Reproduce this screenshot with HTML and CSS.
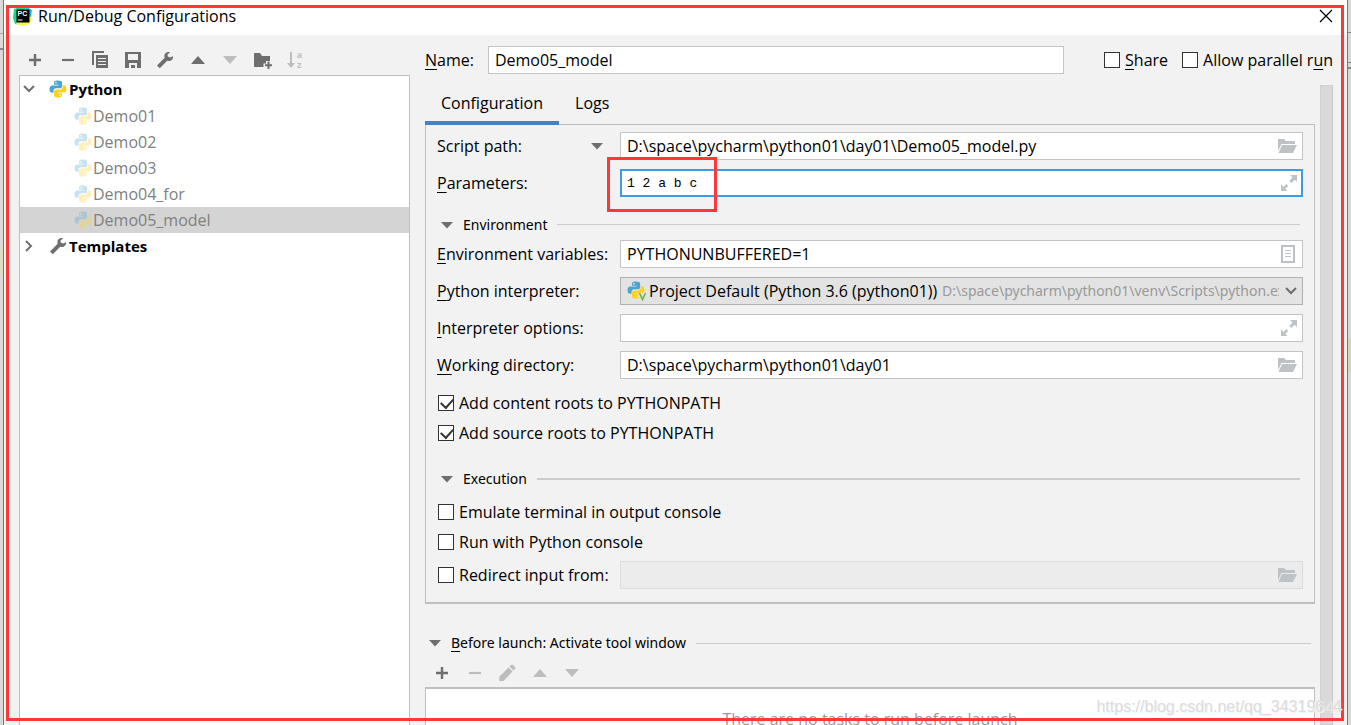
FILE: index.html
```html
<!DOCTYPE html>
<html lang="en">
<head>
<meta charset="utf-8">
<title>Run/Debug Configurations</title>
<link rel="stylesheet" href="styles.css">
</head>
<body>
<svg class="defs" aria-hidden="true">
  <symbol id="python" viewBox="0 0 18 18">
    <path fill="#4fa3d1" d="M8.8.5C5.6.5 5 1.7 5 2.8v2h4.300v.7H3.200C1.500 5.500.500 7 .500 9.200c0 2.300 1 3.600 2.500 3.600h1.500v-1.900c0-1.500 1.200-2.600 2.600-2.600h4c1.200 0 2-.9 2-2.100V2.800C13.100 1.300 11.800.5 8.800.5z"/>
    <path fill="#ffd11f" d="M9.200 17.500c3.200 0 3.800-1.200 3.800-2.300v-2H8.700v-.7h6.100c1.700 0 2.700-1.500 2.700-3.700 0-2.300-1-3.600-2.500-3.600h-1.300v1.700c0 1.500-1.200 2.600-2.600 2.600H7c-1.200 0-2 .9-2 2.100v3.600c0 1.500 1.200 2.300 4.200 2.300z"/>
    <circle cx="7" cy="2.700" r=".8" fill="#fff"/><circle cx="11" cy="15.300" r=".8" fill="#fff"/>
  </symbol>
  <symbol id="wrench" viewBox="0 0 18 18">
    <path fill="currentColor" d="M17 5.200 14 6.600 11.800 5.600 11.500 3.400 14.200 1.200C11.500.2 8.800 1.600 8.400 4.300c-.1.900 0 1.700.3 2.400L1 14.400 3.800 17.200 11.200 9.800c3.300 1.100 6.200-1.400 5.800-4.600z"/>
  </symbol>
  <symbol id="plus" viewBox="0 0 18 18"><path stroke="currentColor" stroke-width="2.400" d="M9 3v12M3 9h12"/></symbol>
  <symbol id="minus" viewBox="0 0 18 18"><path stroke="currentColor" stroke-width="2.200" d="M3 9h12"/></symbol>
  <symbol id="up" viewBox="0 0 18 18"><path fill="currentColor" d="M2 13 9 5l7 8z"/></symbol>
  <symbol id="down" viewBox="0 0 18 18"><path fill="currentColor" d="M2 5h14l-7 8z"/></symbol>
  <symbol id="tri" viewBox="0 0 12 8"><path fill="currentColor" d="M0 1h12L6 7.500z"/></symbol>
  <symbol id="folder" viewBox="0 0 20 16"><path fill="currentColor" d="M1 1h6l2 2h9v3H4.500L1 13zM5 7h15l-4 8H1.500z"/></symbol>
  <symbol id="expand" viewBox="0 0 16 16"><path fill="currentColor" d="M9 0h7v7l-2.300-2.300-3.400 3.300-2-2 3.300-3.500zM0 9v7h6.500l-2.200-2.200 2.900-2.900-1.800-1.800-3 3z"/></symbol>
</svg>
<div class="desktop">
<main class="dialog">
  <header class="titlebar">
    <svg class="logo" viewBox="0 0 20 20">
      <path fill="#21d789" d="M1 3 9 0l5 1-4 18-8-1-2-6z"/><path fill="#fcf84a" d="m13 2 6 9-2 7-7 2-7-2 2-4z"/><path fill="#07c3f2" d="m13 1 6 3-1 7-4-2z"/>
      <path d="M3.500 3.500h13v13h-13z"/>
      <text class="logo-text" x="4.500" y="10">PC</text><path fill="#fff" d="M5 13.500h4.500v1H5z"/>
    </svg>
    <h1 class="title">Run/Debug Configurations</h1>
    <button class="icon-btn close" aria-label="Close"><svg viewBox="0 0 14 14" width="14" height="14"><path stroke="#000" stroke-width="1.200" d="m1 1 12 12M13 1 1 13"/></svg></button>
  </header>
  <div class="body">
    <aside class="side">
      <div class="toolbar">
        <button class="icon-btn" aria-label="Add"><svg class="ic"><use href="#plus"/></svg></button>
        <button class="icon-btn" aria-label="Remove"><svg class="ic"><use href="#minus"/></svg></button>
        <button class="icon-btn" aria-label="Copy"><svg class="ic" viewBox="0 0 18 18"><path fill="currentColor" d="M1 0h12v2H3v12H1zM5 4h12v13H5z"/><path stroke="#f2f2f2" d="M7 7.500h8M7 10.500h8M7 13.500h8"/></svg></button>
        <button class="icon-btn" aria-label="Save"><svg class="ic" viewBox="0 0 18 18"><path fill="currentColor" fill-rule="evenodd" d="M1 1h16v16H1zm3 2v6h10V3zm1 9v5h8v-5z"/><path fill="currentColor" d="M7 14h4v3H7z"/></svg></button>
        <button class="icon-btn" aria-label="Edit templates"><svg class="ic"><use href="#wrench"/></svg></button>
        <button class="icon-btn" aria-label="Move up"><svg class="ic"><use href="#up"/></svg></button>
        <button class="icon-btn off" aria-label="Move down" disabled><svg class="ic"><use href="#down"/></svg></button>
        <button class="icon-btn" aria-label="New folder"><svg class="ic" viewBox="0 0 18 18"><path fill="currentColor" d="M0 2h6l2 3h8v5h-4v2.500H9.500V16H0z"/><path stroke="currentColor" stroke-width="2" d="M14.500 10.500v7.500M11 14.300h7"/></svg></button>
        <button class="icon-btn off" aria-label="Sort"><svg class="ic" viewBox="0 0 18 18"><path fill="currentColor" d="M4 1h2v11h3l-4 5-4-5h3z"/><text class="sort-text" x="11" y="7">a</text><text class="sort-text" x="11" y="17">z</text></svg></button>
      </div>
      <ul class="tree">
        <li class="node root"><svg class="twist" viewBox="0 0 12 12"><path d="m1 3 5 5 5-5"/></svg><svg class="ic"><use href="#python"/></svg>Python</li>
        <li class="node leaf"><svg class="ic dim"><use href="#python"/></svg>Demo01</li>
        <li class="node leaf"><svg class="ic dim"><use href="#python"/></svg>Demo02</li>
        <li class="node leaf"><svg class="ic dim"><use href="#python"/></svg>Demo03</li>
        <li class="node leaf"><svg class="ic dim"><use href="#python"/></svg>Demo04_for</li>
        <li class="node leaf selected"><svg class="ic dim"><use href="#python"/></svg>Demo05_model</li>
        <li class="node root"><svg class="twist" viewBox="0 0 12 12"><path d="m3 1 5 5-5 5"/></svg><svg class="ic gray"><use href="#wrench"/></svg>Templates</li>
      </ul>
    </aside>
    <section class="main">
      <div class="name-row">
        <label for="name"><u>N</u>ame:</label>
        <input class="field name" id="name" value="Demo05_model">
        <label class="check"><input type="checkbox"><span><u>S</u>hare</span></label>
        <label class="check"><input type="checkbox"><span>Allow parallel r<u>u</u>n</span></label>
      </div>
      <div class="scroll">
        <div class="content">
          <nav class="tabs"><button class="tab active">Configuration</button><button class="tab">Logs</button></nav>
          <div class="panel">
            <div class="row">
              <label class="lbl" for="script">Script path:</label><svg class="tri"><use href="#tri"/></svg>
              <div class="field box"><input id="script" value="D:\space\pycharm\python01\day01\Demo05_model.py"><svg class="end folder"><use href="#folder"/></svg></div>
            </div>
            <div class="row">
              <label class="lbl" for="params"><u>P</u>arameters:</label>
              <div class="field box focus"><input class="mono" id="params" value="1 2 a b c"><svg class="end expand"><use href="#expand"/></svg><span class="mark"></span></div>
            </div>
            <h2 class="group env"><svg class="tri"><use href="#tri"/></svg>Environment</h2>
            <div class="row">
              <label class="lbl" for="env"><u>E</u>nvironment variables:</label>
              <div class="field box"><input id="env" value="PYTHONUNBUFFERED=1"><svg class="end doc" viewBox="0 0 14 18"><path fill="none" stroke="currentColor" stroke-width="2" d="M1 1h12v16H1z"/><path stroke="currentColor" d="M4 5.500h6M4 8.500h6M4 11.500h6"/></svg></div>
            </div>
            <div class="row">
              <label class="lbl" for="interp"><u>P</u>ython interpreter:</label>
              <div class="field box combo">
                <svg class="venv" viewBox="0 0 20 20"><use href="#python" width="18" height="18"/><path fill="none" stroke="#e3e3e3" stroke-width="4" d="m13 12 2.500 7 3-7"/><path fill="none" stroke="#62b543" stroke-width="1.600" d="m12.500 12 3 6.500 3-6.500"/></svg>
                <select id="interp"><option>Project Default (Python 3.6 (python01))</option></select>
                <span class="path">D:\space\pycharm\python01\venv\Scripts\python.exe</span>
                <svg class="chev" viewBox="0 0 12 8"><path d="m1 1 5 5 5-5"/></svg>
              </div>
            </div>
            <div class="row">
              <label class="lbl" for="opts"><u>I</u>nterpreter options:</label>
              <div class="field box"><input id="opts"><svg class="end expand"><use href="#expand"/></svg></div>
            </div>
            <div class="row">
              <label class="lbl" for="wd"><u>W</u>orking directory:</label>
              <div class="field box"><input id="wd" value="D:\space\pycharm\python01\day01"><svg class="end folder"><use href="#folder"/></svg></div>
            </div>
            <label class="check line"><input type="checkbox" checked><span>Add content roots to PYTHONPATH</span></label>
            <label class="check line"><input type="checkbox" checked><span>Add source roots to PYTHONPATH</span></label>
            <h2 class="group exec"><svg class="tri"><use href="#tri"/></svg>Execution</h2>
            <label class="check line"><input type="checkbox"><span>Emulate terminal in output console</span></label>
            <label class="check line"><input type="checkbox"><span>Run with Python console</span></label>
            <div class="row redirect">
              <label class="check lbl"><input type="checkbox"><span>Redirect input from:</span></label>
              <div class="field box disabled"><input aria-label="Redirect input from" disabled><svg class="end folder"><use href="#folder"/></svg></div>
            </div>
          </div>
          <h2 class="group before"><svg class="tri"><use href="#tri"/></svg><span><u>B</u>efore launch: Activate tool window</span></h2>
          <div class="toolbar tasks-bar">
            <button class="icon-btn" aria-label="Add task"><svg class="ic"><use href="#plus"/></svg></button>
            <button class="icon-btn off" aria-label="Remove task" disabled><svg class="ic"><use href="#minus"/></svg></button>
            <button class="icon-btn off" aria-label="Edit task" disabled><svg class="ic" viewBox="0 0 18 18"><path fill="currentColor" d="m1 17 .5-4.500 9-9 4 4-9 9.500zM11.500 2.500 13 1q1-1 2 0l2 2q1 1 0 2l-1.500 1.500z"/></svg></button>
            <button class="icon-btn off" aria-label="Task up" disabled><svg class="ic"><use href="#up"/></svg></button>
            <button class="icon-btn off" aria-label="Task down" disabled><svg class="ic"><use href="#down"/></svg></button>
          </div>
          <div class="tasks">There are no tasks to run before launch</div>
        </div>
        <div class="scrollbar"></div>
      </div>
    </section>
  </div>
</main>
<div class="frame"></div>
<div class="watermark">https://blog.csdn.net/qq_34319644</div>
</div>
</body>
</html>
```
FILE: styles.css
```css
* { box-sizing: border-box; }
html, body { margin: 0; height: 100%; overflow: hidden; }
body { font: 16px/24px "Open Sans", "Noto Sans", sans-serif; color: #000; }
h1, h2, ul { margin: 0; padding: 0; font-weight: 400; }
button, input, select { font: inherit; color: inherit; margin: 0; }
u { text-underline-offset: 3px; text-decoration-thickness: 1px; text-decoration-skip-ink: none; }
.defs { position: absolute; width: 0; height: 0; }

.desktop {
  position: relative;
  height: 100vh;
  padding: 0 3px;
  overflow: hidden;
  background:
    linear-gradient(#888, #888) 100% 32px / 3px 1px no-repeat,
    linear-gradient(#888, #888) 100% 62px / 3px 1px no-repeat,
    linear-gradient(#888, #888) 100% 67px / 3px 2px no-repeat,
    linear-gradient(#d8d4b8, #d8d4b8) 100% 339px / 3px 33px no-repeat,
    linear-gradient(#aaa, #aaa) 0 33px / 3px 1px no-repeat,
    linear-gradient(#888, #888) 0 48px / 3px 2px no-repeat,
    linear-gradient(#dcdcc0, #dcdcc0) 0 249px / 3px 26px no-repeat,
    #d9d9d6;
}
.dialog { display: flex; flex-direction: column; height: 100%; background: #f2f2f2; border: solid #777; border-width: 0 1px; }
.titlebar { display: flex; align-items: center; flex: none; height: 35px; padding: 0 14px 3px 9px; background: #fff; }
.logo { width: 20px; height: 20px; margin-right: 5px; }
.logo-text { font: bold 7px "Liberation Sans", sans-serif; fill: #fff; }
.title { flex: 1; font-size: 16px; }
.icon-btn { display: flex; padding: 0; border: 0; background: none; color: #6e6e6e; }
.icon-btn.off { color: #bdbdbd; }
.ic { width: 18px; height: 18px; flex: none; overflow: visible; }
.gray { color: #6e6e6e; }
.dim { opacity: .3; }

.body { display: grid; grid-template-columns: 391px minmax(0, 1fr); gap: 15px; flex: 1; min-height: 0; padding: 0 14px 0 15px; }
.side { display: flex; flex-direction: column; min-height: 0; }
.toolbar { display: flex; align-items: center; justify-content: space-between; width: 292px; height: 40px; padding: 10px 7px 0; }
.sort-text { font: bold 9px "Liberation Sans", sans-serif; fill: #bdbdbd; }
.tree { flex: 1; list-style: none; background: #fff; border: 1px solid #bfbfbf; border-bottom: 0; }
.node { display: flex; align-items: center; gap: 1px; height: 26px; color: #808080; }
.root { gap: 2px; height: 27px; padding: 0 0 1px 3px; font-weight: 700; font-size: 15px; color: #000; }
.leaf { padding-left: 54px; }
.selected { background: #d4d4d4; }
.twist { width: 12px; height: 12px; margin-right: 12px; fill: none; stroke: #6e6e6e; stroke-width: 2; }

.main { display: flex; flex-direction: column; min-width: 0; min-height: 0; }
.name-row { display: flex; align-items: center; padding-top: 11px; }
.field { height: 28px; border: 1px solid #c4c4c4; outline: 0; background: #fff; }
.name { flex: 1; min-width: 0; margin: 0 39px 0 14px; padding: 0 6px; }
.check { display: flex; align-items: center; gap: 5px; padding-left: 1px; }
.name-row .check + .check { margin-left: 13px; }
.check input { appearance: none; position: relative; flex: none; width: 16px; height: 16px; border: 1px solid #333; background: #fff; }
.check input:checked::after { content: ""; position: absolute; left: 4px; top: 0; width: 6px; height: 10px; border: solid #333; border-width: 0 2px 2px 0; transform: rotate(42deg); }
.line { height: 30px; }

.scroll { display: flex; gap: 5px; flex: 1; min-height: 0; padding-top: 11px; }
.content { flex: 1; min-width: 0; }
.scrollbar { width: 13px; background: #d9d9d9; border: 1px solid #d0d0d0; border-right-color: #c8c8c8; }
.tabs { position: relative; z-index: 1; display: flex; height: 40px; }
.tab { padding: 0 16px; border: 0; border-bottom: 4px solid transparent; background: none; }
.active { border-color: #4083c9; }
.panel { margin-top: -1px; padding: 7px 11px 13px; border: 1px solid #bfbfbf; border-bottom-width: 2px; }
.row { display: flex; align-items: center; margin-bottom: 9px; }
.lbl { width: 183px; flex: none; white-space: nowrap; }
.tri { width: 12px; height: 8px; flex: none; color: #6e6e6e; }
.row .tri { margin: 0 17px 0 -29px; }
.box { position: relative; display: flex; align-items: center; flex: 1; min-width: 0; padding: 0 5px 0 6px; }
.box input { flex: 1; min-width: 0; width: 0; height: 24px; padding: 0; border: 0; outline: 0; background: none; }
.focus { border: 2px solid #3c9be5; padding: 0 4px 0 5px; }
.box .mono { font: 13px "Liberation Mono", monospace; }
.end { flex: none; color: #bcc2c6; }
.folder { width: 20px; height: 16px; }
.expand { width: 16px; height: 16px; }
.doc { width: 14px; height: 18px; margin-right: 2px; }
.mark { position: absolute; left: -15px; top: -14px; width: 110px; height: 55px; border: 3px solid #fc3838; }
.combo { background: #e3e3e3; border-color: #b0b0b0; }
.venv { width: 20px; height: 20px; flex: none; margin-right: 2px; }
.combo select { flex: none; appearance: none; padding: 0; border: 0; outline: 0; background: none; }
.path { flex: 1; min-width: 0; margin: 0 6px 0 4px; overflow: hidden; white-space: nowrap; font-size: 14px; font-family: "Noto Sans", sans-serif; color: #999; }
.chev { width: 12px; height: 8px; flex: none; fill: none; stroke: #6e6e6e; stroke-width: 2; }
.disabled { background: #ececec; border-color: #dcdcdc; }

.group { display: flex; align-items: center; gap: 10px; font: 14px/20px "Noto Sans", sans-serif; }
.group::after { content: ""; flex: 1; border-top: 1px solid #ccc; }
.env { height: 34px; padding: 3px 3px 0 4px; }
.exec { height: 49px; padding: 12px 3px 0 4px; }
.exec::after { border-top-width: 2px; }
.redirect { margin: 4px 0 0; }
.before { height: 52px; padding: 26px 4px 0; }
.tasks-bar { width: 164px; height: 31px; padding: 2px 8px 0; }
.tasks { padding: 18px; border: 1px solid #bfbfbf; border-top-width: 2px; background: #fff; color: #999; text-align: center; }

.frame { position: absolute; inset: 5px 7px 4px 6px; border: 3px solid #fc3838; pointer-events: none; }
.watermark { position: absolute; right: 9px; bottom: 6px; font: 16px/24px "Liberation Sans", sans-serif; color: #dcdcdc; text-shadow: 1px 1px 0 #f4f4f4; }
```
